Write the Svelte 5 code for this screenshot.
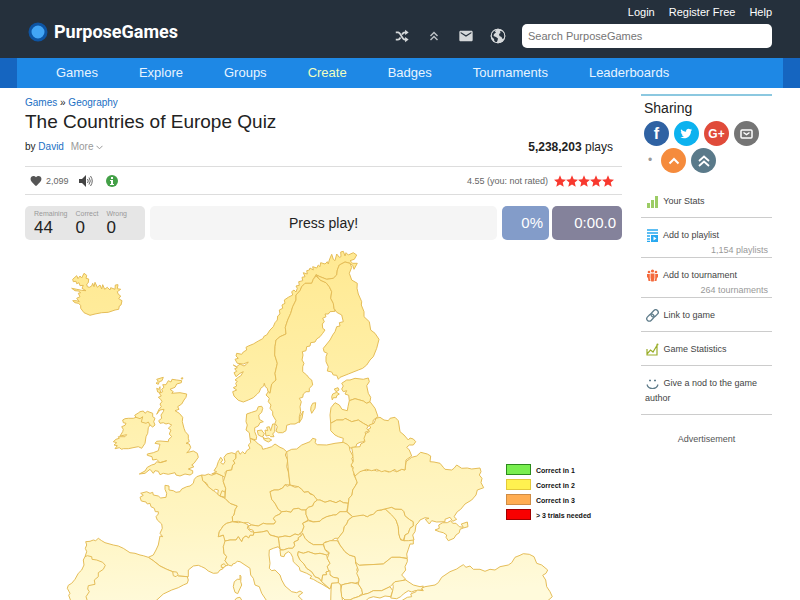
<script>
  const menu = ["Games", "Explore", "Groups", "Create", "Badges", "Tournaments", "Leaderboards"];

  const score = [
    { label: "Remaining", value: 44 },
    { label: "Correct", value: 0 },
    { label: "Wrong", value: 0 },
  ];

  const actions = [
    { icon: "stats", label: "Your Stats" },
    { icon: "playlist", label: "Add to playlist", note: "1,154 playlists" },
    { icon: "people", label: "Add to tournament", note: "264 tournaments" },
    { icon: "link", label: "Link to game" },
    { icon: "chart", label: "Game Statistics" },
    { icon: "smile", label: "Give a nod to the game author" },
  ];

  const legend = [
    { label: "Correct in 1", fill: "#78ee4f", stroke: "#2c8a1c" },
    { label: "Correct in 2", fill: "#fff150", stroke: "#e3c93a" },
    { label: "Correct in 3", fill: "#ffad52", stroke: "#cf8c45" },
    { label: "> 3 trials needed", fill: "#f80000", stroke: "#a00000" },
  ];

  // outlines are drawn on a grid three times finer than the map,
  // each sheet has its own origin
  const sheets = [
    {
      x: 220,
      y: 240,
      shapes: {
        norway:
          "133,430 131,438 122,445 118,456 112,462 100,473 85,480 70,486 55,481 42,468 38,455 50,450 40,443 50,438 47,430 52,424 45,420 55,412 62,408 70,395 60,400 48,410 42,398 50,394 44,386 52,383 40,375 50,380 60,372 72,378 78,374 85,366 70,372 52,370 45,358 55,355 48,348 50,340 65,343 70,336 80,330 78,322 85,318 100,312 115,303 128,296 133,288 140,285 150,270 160,260 165,248 172,240 173,228 180,222 178,210 188,205 186,195 195,190 193,180 205,172 218,165 215,155 222,150 228,156 232,145 228,138 238,136 236,125 248,122 246,112 255,110 250,98 262,102 260,92 268,90 270,84 280,90 278,80 290,84 295,75 300,80 302,68 315,72 322,65 325,72 328,60 335,43 340,58 345,62 350,42 358,52 363,50 362,36 370,34 375,48 378,38 385,45 400,38 410,45 403,58 390,62 398,70 412,70 402,88 398,76 390,70 375,66 358,75 352,90 350,105 340,115 320,118 300,110 288,104 280,118 275,130 255,130 245,140 240,152 228,165 228,180 218,200 212,220 203,240 196,262 198,282 180,290 168,300 165,320 164,345 172,370 165,400 168,420 155,432 150,460 144,455 142,445 136,440",
        sweden:
          "288,108 300,120 318,128 328,140 335,155 332,175 340,190 342,205 345,214 330,215 325,222 315,222 318,230 308,235 313,245 307,252 308,265 315,270 308,280 300,290 290,297 285,306 272,308 270,318 260,320 258,332 247,335 249,345 246,360 252,370 248,380 248,395 260,405 268,415 275,420 278,435 268,445 268,455 258,455 250,462 248,472 238,475 244,485 240,500 242,515 238,530 238,545 225,552 212,552 200,556 198,572 188,578 175,578 168,573 172,560 165,550 168,542 158,525 158,515 150,505 153,495 145,485 148,475 138,465 145,455 150,460 155,432 168,420 165,400 172,370 164,345 165,320 168,300 180,290 198,282 196,262 203,240 212,220 218,200 228,180 228,165 240,152 245,140 255,130 275,130 280,118",
        finland:
          "288,104 300,110 320,118 340,115 350,105 352,90 358,75 375,66 390,70 395,82 388,100 395,120 412,130 411,145 415,162 425,185 424,195 432,215 432,230 448,245 452,270 465,280 477,298 470,325 460,350 450,360 440,375 428,385 415,390 385,402 360,412 355,418 350,406 340,405 335,396 322,393 325,380 318,365 318,350 322,340 312,335 310,325 318,315 330,300 338,285 345,275 350,260 360,258 358,248 370,245 365,225 350,217 342,205 340,190 332,175 335,155 328,140 318,128 300,120",
        estonia:
          "365,430 380,420 390,420 405,415 430,418 445,414 448,425 440,437 445,460 452,472 450,485 440,490 430,483 405,476 388,482 386,466 375,462 380,452 370,455 365,447 370,438",
        latvia:
          "388,482 405,476 430,483 440,490 450,485 465,505 474,530 460,540 458,552 445,558 430,550 415,540 395,545 375,535 370,540 350,540 332,550 330,525 333,503 345,488 358,495 366,508 382,512 384,500",
        lithuania:
          "332,550 350,540 370,540 375,535 395,545 415,540 430,550 445,558 440,566 447,572 435,577 438,585 432,605 420,607 410,612 408,620 395,625 385,622 378,612 368,608 370,595 355,590 345,585 332,572",
        saaremaa: "338,462 350,457 358,462 350,467 349,473 340,473 337,480 335,470",
        hiiumaa: "343,447 354,443 357,450 348,455",
        gotland: "272,510 273,500 278,490 287,488 285,505 275,520",
        oland: "238,548 240,530 250,513 246,535",
        jutland:
          "78,570 82,555 78,545 80,522 95,517 110,512 115,500 125,499 128,505 125,517 116,525 118,538 130,545 120,548 115,558 104,563 104,575 110,590 108,600 90,595 88,578",
        funen: "112,572 125,570 128,576 133,580 130,588 125,590 115,585",
        zealand: "135,570 143,572 140,562 148,560 152,572 158,552 165,552 164,575 158,582 162,590 152,590 148,586 138,588",
        lolland: "128,590 135,596 145,594 155,600 145,606 133,600",
      },
    },
    {
      x: 60,
      y: 260,
      shapes: {
        iceland:
          "38,58 50,47 54,56 60,48 65,54 72,40 80,46 78,55 86,57 85,68 80,72 82,80 88,82 95,78 98,70 102,80 105,67 112,82 120,75 125,87 128,74 134,88 142,82 150,90 152,83 165,88 166,75 174,74 172,86 182,88 172,95 175,103 182,108 176,116 186,122 183,135 178,138 176,148 165,150 145,157 125,158 105,162 90,166 72,158 62,145 62,136 55,130 45,128 38,122 50,122 58,125 50,115 60,110 55,100 62,98 55,93 45,92 35,85 50,88 65,91 78,92 66,85 70,76 60,77 57,68 50,71 48,64 40,65",
        britain:
          "325,362 333,366 336,358 350,360 365,362 364,368 350,372 345,382 330,388 340,395 335,400 360,398 380,402 378,412 372,420 365,432 353,440 357,448 345,452 358,460 368,472 367,485 372,505 376,515 385,525 385,535 388,545 378,550 388,552 392,562 387,572 380,578 400,573 412,580 415,592 402,610 395,615 402,620 385,627 398,632 398,640 390,645 375,642 360,648 348,645 345,638 325,643 310,640 300,644 295,634 285,632 280,640 270,628 255,640 238,642 255,633 262,622 275,615 285,612 290,605 300,608 320,602 300,608 290,598 278,600 276,590 262,586 262,582 280,578 295,572 298,560 300,553 285,550 290,544 300,543 325,545 326,538 335,530 328,522 333,510 325,505 335,495 325,490 318,492 310,488 300,490 296,482 305,475 303,465 310,455 312,448 300,450 290,463 297,448 304,440 300,432 306,425 302,418 295,412 304,408 298,400 308,395 305,388 312,382 308,374 318,374",
        lewis: "288,370 295,364 290,358 310,352 306,362 298,365 295,373",
        skye: "290,385 296,388 300,380 300,390 303,398 293,396",
        orkney: "364,354 368,353 368,357 364,357",
        ireland:
          "188,480 195,476 205,475 220,475 228,472 224,466 236,458 240,455 250,453 255,460 262,454 278,460 278,470 285,475 281,485 285,495 278,501 270,495 265,503 263,520 258,530 255,550 245,565 235,560 225,562 205,566 190,566 185,568 178,563 165,566 172,557 162,555 170,548 160,545 168,538 178,535 175,530 195,530 200,524 180,528 188,515 190,508 185,500 195,496 198,490 190,488",
      },
      borders: ["228,472 240,476 248,470 244,486 258,490 265,486 270,495"],
    },
    {
      x: 50,
      y: 440,
      shapes: {
        france:
          "455,105 440,110 433,118 430,130 420,138 410,140 395,147 390,155 378,157 370,152 357,150 357,138 345,136 345,148 350,160 348,172 332,174 325,168 310,165 308,157 300,160 290,155 272,160 280,166 270,172 274,183 288,186 292,192 300,190 303,200 313,205 316,215 325,215 325,222 318,230 322,240 335,252 337,265 330,280 338,290 330,288 325,315 318,330 310,345 295,352 310,362 330,378 350,388 368,395 385,408 415,410 415,390 430,378 445,376 455,380 465,385 475,393 490,400 503,399 510,390 518,387 520,380 535,375 525,362 530,350 522,340 520,320 527,308 525,300 522,285 505,290 508,275 515,265 520,257 530,250 548,245 547,230 552,225 556,208 562,198 540,190 525,175 510,168 495,155 475,140 460,122",
        belgium:
          "455,105 465,106 475,102 485,106 500,100 518,108 520,125 527,145 522,170 510,168 503,163 505,150 497,148 490,152 475,140 470,130 458,122",
        netherlands:
          "485,102 500,95 492,92 500,80 505,65 512,52 518,60 512,68 520,73 525,65 522,52 530,42 545,38 557,42 558,55 550,62 555,70 548,75 545,90 530,92 525,98 528,115 518,108 500,100",
        luxembourg: "510,168 516,152 525,156 525,172",
        switzerland:
          "505,290 508,275 515,265 520,257 530,250 548,245 565,248 575,245 595,255 592,265 603,275 612,276 610,286 600,286 596,294 588,288 580,293 575,305 565,290 558,300 540,300 525,303 520,285",
        spain:
          "295,352 280,347 270,345 255,340 240,338 220,325 205,318 190,315 165,308 155,302 145,295 137,302 130,300 120,304 107,305 110,315 106,325 110,335 105,350 100,360 102,375 95,390 85,400 75,418 65,430 55,436 52,445 60,460 56,466 62,482 318,482 340,462 365,450 385,443 400,435 412,430 415,420 412,410 385,408 368,395 350,388 330,378 310,362",
        andorra: "368,395 380,396 384,404 378,410 370,407",
        monaco: "514,375 522,371 527,376 522,383 514,382",
        corsica: "570,405 573,410 572,425 575,435 568,450 563,461 555,457 550,440 553,425 562,418 570,418",
        sardinia: "553,482 560,474 570,472 576,482",
      },
      borders: [
        "105,350 112,347 125,350 126,358 140,360 158,367 166,376 160,388 145,398 145,410 133,420 135,433 115,437 113,447 118,455 108,470 112,482",
      ],
    },
    {
      x: 230,
      y: 420,
      shapes: {
        germany:
          "18,97 25,92 30,103 38,95 45,102 50,92 60,85 55,75 62,68 60,55 75,62 85,72 95,78 98,88 110,85 125,80 135,72 150,82 160,86 170,95 166,105 173,120 170,140 175,155 178,175 180,195 165,194 158,204 145,210 132,210 120,215 122,220 125,238 135,250 145,268 155,275 150,282 137,288 130,295 137,305 132,312 110,312 100,310 85,318 65,315 55,308 40,308 25,304 8,305 7,290 12,285 16,268 22,258 0,250 -15,235 -13,205 -20,185 -12,160 -10,152 5,150 8,135 15,130 10,122 18,115",
        poland:
          "170,95 185,88 200,87 215,75 240,65 248,55 258,58 255,68 262,74 290,75 315,70 340,67 352,73 358,80 360,92 370,110 365,115 370,128 363,138 372,150 372,165 382,185 375,200 368,210 366,225 357,235 355,250 340,248 330,242 318,248 300,242 285,247 270,240 262,242 250,225 240,220 235,215 222,217 215,208 205,200 180,195 175,150",
        czechia:
          "120,215 132,210 145,210 158,204 165,194 172,199 180,195 195,202 205,200 215,208 222,217 235,215 240,222 250,225 262,240 252,248 248,258 235,262 228,270 215,270 205,265 190,267 183,277 170,274 155,275 145,268 135,250 125,238",
        austria:
          "65,315 85,318 100,310 110,312 132,312 137,305 130,295 137,288 150,282 155,275 170,274 183,277 190,267 205,265 215,270 228,270 228,283 235,300 218,310 222,320 216,335 205,345 195,342 180,350 165,348 145,352 130,347 120,345 112,332 95,336 72,338 68,330 58,328 55,318",
        slovakia:
          "228,270 235,262 248,258 252,248 262,240 270,240 285,247 300,242 318,248 330,242 340,248 355,250 350,275 340,277 330,275 318,285 310,285 290,290 275,298 270,304 250,305 235,300 228,283",
        hungary:
          "235,302 250,306 270,304 275,298 290,290 310,285 318,285 330,275 350,275 368,290 355,300 350,312 343,320 340,335 325,355 315,355 300,365 285,366 280,374 250,374 235,365 225,355 215,338 222,320 218,310",
        slovenia:
          "145,352 165,348 180,350 195,342 205,345 212,340 214,347 205,353 205,360 192,366 194,377 188,385 175,385 160,390 150,388 147,370",
        croatia:
          "150,390 160,390 175,385 188,385 194,377 192,366 205,360 205,353 214,347 218,340 225,355 235,365 250,374 280,374 285,388 290,395 298,398 290,405 270,400 255,402 235,395 220,400 205,395 203,405 210,420 222,432 230,445 245,455 255,470 268,475 275,485 300,507 275,492 262,485 250,478 240,475 245,468 230,460 210,452 208,442 197,432 190,425 188,412 182,400 175,395 165,402 162,410 152,408",
        bosnia:
          "205,395 220,400 235,395 255,402 270,400 290,405 292,415 300,430 292,440 300,452 288,456 290,464 278,465 275,485 268,475 255,470 245,455 230,445 222,432 210,420 203,405",
        serbia:
          "280,370 300,362 322,362 330,375 345,395 358,405 375,410 378,425 385,435 380,450 385,460 388,485 375,490 365,488 345,492 335,495 325,490 325,475 310,472 300,465 292,440 300,430 292,415 298,398 285,388",
        montenegro: "278,465 290,464 288,456 300,452 300,465 310,472 325,475 325,490 305,490 300,507 275,485",
        albania: "305,490 325,488 332,495 333,510 335,525 338,545 302,545 303,510",
        macedonia: "335,495 345,492 365,488 385,492 395,508 398,520 385,530 370,535 360,540 345,540 335,530 333,510",
        italy:
          "-15,363 0,360 18,360 25,350 35,365 40,353 48,348 56,354 60,346 70,346 72,338 95,336 112,332 120,345 145,352 147,370 150,388 145,380 130,385 118,390 117,405 120,430 118,445 125,452 135,450 150,465 155,480 165,498 185,515 200,518 210,513 218,518 205,528 222,545 112,545 95,520 88,500 75,495 70,475 62,465 60,445 45,435 30,425 22,424 15,430 8,432 5,438 -5,435 -15,422 -10,410 -18,400 -20,380",
        romania:
          "368,290 380,285 400,285 412,290 420,285 430,283 440,272 455,270 465,266 480,280 490,285 498,300 505,320 506,340 512,360 525,362 540,352 550,352 550,372 540,372 535,388 530,402 532,415 510,412 485,412 460,432 420,434 388,436 378,432 375,410 358,405 345,395 330,375 322,358 340,335 343,320 350,312 355,300",
        moldova:
          "455,269 470,264 485,262 495,267 515,268 522,275 525,287 538,298 550,305 550,318 540,325 535,340 525,345 520,362 510,355 506,340 505,320 498,300 485,285 465,266",
        bulgaria:
          "376,426 388,436 420,434 460,432 485,412 510,412 532,416 532,425 525,440 527,450 515,465 527,478 510,485 495,485 488,492 480,500 455,512 430,512 415,520 398,524 395,508 385,492 388,478 380,460 385,450",
        greece:
          "338,545 345,540 360,540 370,535 385,530 398,524 415,520 430,512 455,512 480,500 488,512 482,530 465,528 450,534 430,530 415,535 405,545",
        thrace:
          "488,492 495,485 527,480 550,495 570,500 580,498 575,510 555,512 545,516 535,512 520,522 512,530 500,536 482,534 488,512 490,500",
        ukraine:
          "372,162 382,158 390,150 410,152 425,147 440,153 460,150 475,156 485,150 500,155 515,148 525,150 528,125 545,112 560,108 572,97 592,102 602,108 600,125 612,126 630,130 640,142 645,148 665,150 672,145 680,135 695,145 712,144 725,147 750,144 753,155 748,165 756,175 753,188 761,203 742,210 738,225 725,240 705,252 692,268 682,275 672,290 680,298 668,304 660,292 645,298 645,305 620,306 605,302 598,312 586,298 597,295 585,293 570,300 565,308 558,315 555,335 548,345 552,360 535,362 522,362 525,345 535,340 540,325 550,318 550,305 538,298 525,287 522,275 515,268 495,267 485,262 455,269 440,272 430,283 420,285 412,290 400,285 368,290 352,275 357,235 366,225 368,210 382,188",
      },
    },
    {
      x: 380,
      y: 420,
      shapes: {
        crimea:
          "165,330 178,325 176,315 188,308 202,308 212,302 218,310 228,310 238,320 250,322 244,312 262,306 264,320 250,324 240,328 238,338 228,345 222,355 205,362 198,352 200,345 190,338 178,335",
        turkey:
          "60,545 82,532 95,530 92,522 108,515 112,510 130,512 125,505 135,500 165,495 175,488 185,472 210,455 230,447 240,440 250,434 258,442 270,438 280,448 300,448 315,454 330,448 345,450 360,440 385,435 395,428 405,412 420,406 430,401 448,403 462,410 470,430 485,435 503,450 498,460 488,466 497,480 500,500 510,515 517,530 500,545",
      },
    },
    {
      x: 300,
      y: 370,
      shapes: {
        belarus:
          "155,232 180,230 182,222 195,215 192,205 198,190 208,185 205,178 212,174 208,165 222,160 228,145 240,142 252,150 265,152 270,145 285,142 295,152 297,165 300,185 312,195 325,210 330,204 340,207 347,215 340,225 328,225 320,232 328,240 335,258 318,270 315,300 305,298 290,305 285,298 270,306 255,302 245,305 230,298 215,302 200,298 180,305 165,318 158,300 160,292 153,285 160,275 158,250",
      },
    },
  ];

  function place(points, sheet) {
    return points
      .split(" ")
      .map((pair) => {
        const [x, y] = pair.split(",");
        return (sheet.x + x / 3).toFixed(1) + "," + (sheet.y + y / 3).toFixed(1);
      })
      .join(" ");
  }

  let query = "";
</script>

<header>
  <a class="logo" href="/">
    <svg width="20" height="20" viewBox="0 0 20 20" aria-hidden="true">
      <circle cx="10" cy="10" r="8" fill="#42a5f5" stroke="#0d54a3" stroke-width="3" />
    </svg>
    <span>PurposeGames</span>
  </a>

  <div class="header-right">
    <div class="account">
      <a href="/login">Login</a>
      <a href="/register">Register Free</a>
      <a href="/help">Help</a>
    </div>
    <div class="tools">
      <a href="/random" aria-label="Random game">
        <svg viewBox="-1 -1 18 18" fill="none" stroke="#d5d8da" stroke-width="2">
          <path d="M1 4h2.500c3.500 0 4 8 8 8h1M1 12h2.500c1.300 0 2.100-1 2.800-2.300M8 6.300C8.800 5 9.700 4 11.500 4h1" />
          <path d="M11.500 1v6L15.500 4zM11.500 9v6l4-3z" fill="#d5d8da" stroke="none" />
        </svg>
      </a>
      <a href="/top" aria-label="Top games">
        <svg viewBox="0 0 16 16" fill="none" stroke="#bfc3c7" stroke-width="1.400">
          <path d="M4.500 8L8 4.500 11.500 8M4.500 12L8 8.500l3.500 3.500" />
        </svg>
      </a>
      <a href="/messages" aria-label="Messages">
        <svg viewBox="0 1 24 22" fill="#d5d8da">
          <path d="M20 4H4c-1.100 0-2 .9-2 2v12c0 1.100.9 2 2 2h16c1.100 0 2-.9 2-2V6c0-1.100-.9-2-2-2zm0 4l-8 5-8-5V6l8 5 8-5v2z" />
        </svg>
      </a>
      <a href="/language" aria-label="Language">
        <svg viewBox="0 0 16 16">
          <circle cx="8" cy="8" r="7.300" fill="#d5d8da" />
          <path d="M7 1.500L4.500 3 6 4.500 4 6l-.5 2L6 9l2 1.500-.5 2L6.500 15 4.500 14l-.5-3-2-2L1 6.500 3 3zM10 3l3 .5L15 7l-.5 3-2 1-1-2L9.500 8 9 6l1.500-1z" fill="#25303c" />
          <circle cx="8" cy="8" r="6.800" fill="none" stroke="#d5d8da" />
        </svg>
      </a>
      <input type="search" aria-label="Search" placeholder="Search PurposeGames" bind:value={query} />
    </div>
  </div>
</header>

<nav>
  <div class="menu">
    {#each menu as item}
      <a href="/{item.toLowerCase()}" class:create={item === "Create"}>{item}</a>
    {/each}
  </div>
</nav>

<div class="page">
  <main>
    <div class="crumbs"><a href="/games">Games</a> » <a href="/geography">Geography</a></div>
    <h1>The Countries of Europe Quiz</h1>
    <div class="byline">
      <div>
        by <a href="/david">David</a>
        <button class="more">
          More
          <svg width="7" height="5" viewBox="0 0 7 5" fill="none" stroke="#999"><path d="M.5.800l3 3 3-3" /></svg>
        </button>
      </div>
      <div class="plays"><b>5,238,203</b> plays</div>
    </div>

    <div class="toolbar">
      <button class="likes" aria-label="Like, 2,099 likes">
        <svg width="12" height="12" viewBox="1 2 22 20" fill="#555">
          <path
            d="M12 21.350l-1.450-1.320C5.400 15.360 2 12.280 2 8.500 2 5.420 4.420 3 7.500 3c1.740 0 3.410.81 4.500 2.090C13.090 3.810 14.760 3 16.500 3 19.580 3 22 5.420 22 8.500c0 3.780-3.400 6.860-8.550 11.540z"
          />
        </svg>
        2,099
      </button>
      <button aria-label="Sound">
        <svg width="14" height="12" viewBox="0 0 14 12" fill="none" stroke="#666">
          <path d="M0 4h3l4-4v12L3 8H0z" fill="#444" stroke="none" />
          <path d="M8.500 4q1.500 2 0 4M10 2.500q2.600 3.500 0 7M11.500 1q3.500 5 0 10" />
        </svg>
      </button>
      <button aria-label="Information">
        <svg width="12" height="12" viewBox="0 0 12 12">
          <circle cx="6" cy="6" r="6" fill="#43a047" />
          <path d="M5 2h2v2H5zM4 5h3v4h1v1H4V9h1V6H4z" fill="#fff" />
        </svg>
      </button>
      <div class="rating">
        <span>4.55 (you: not rated)</span>
        <div class="stars">
          {#each Array(5) as _}
            <svg viewBox="2 2 20 19" fill="#f8392f">
              <path d="M12 17.270L18.180 21l-1.640-7.030L22 9.240l-7.190-.61L12 2 9.190 8.630 2 9.240l5.460 4.730L5.820 21z" />
            </svg>
          {/each}
        </div>
      </div>
    </div>

    <div class="board">
      <div class="score">
        {#each score as item}
          <div>
            <span>{item.label}</span>
            <strong>{item.value}</strong>
          </div>
        {/each}
      </div>
      <button class="prompt">Press play!</button>
      <div class="meters">
        <div class="percent">0%</div>
        <div class="clock">0:00.0</div>
      </div>
    </div>

    <svg class="map" viewBox="25 240 597 360" role="img" aria-label="Map of Europe">
      <defs>
        <linearGradient id="land" gradientUnits="userSpaceOnUse" x1="300" y1="250" x2="320" y2="600">
          <stop offset="0" stop-color="#ffe992" />
          <stop offset=".3" stop-color="#ffeea3" />
          <stop offset=".55" stop-color="#fff2b4" />
          <stop offset=".75" stop-color="#fff5c2" />
          <stop offset="1" stop-color="#fffadb" />
        </linearGradient>
      </defs>
      <g class="countries">
        {#each sheets as sheet}
          {#each Object.values(sheet.shapes) as shape}
            <polygon points={place(shape, sheet)} />
          {/each}
          {#each sheet.borders || [] as border}
            <polyline points={place(border, sheet)} />
          {/each}
        {/each}
      </g>
      {#each legend as row, i}
        <rect x="506.500" y={464.5 + i * 15} width="24" height="10" fill={row.fill} stroke={row.stroke} />
        <text x="536" y={473 + i * 15}>{row.label}</text>
      {/each}
    </svg>
  </main>

  <aside>
    <h2>Sharing</h2>
    <ul class="share">
      <li><a class="facebook" href="/share/facebook" aria-label="Facebook">f</a></li>
      <li>
        <a class="twitter" href="/share/twitter" aria-label="Twitter">
          <svg width="13" height="13" viewBox="1 1 23 23" fill="#fff">
            <path
              d="M22.460 6c-.77.35-1.600.58-2.460.69.88-.53 1.560-1.370 1.880-2.380-.83.5-1.750.85-2.720 1.050C18.370 4.500 17.260 4 16 4c-2.350 0-4.270 1.920-4.270 4.290 0 .34.040.67.110.98C8.280 9.090 5.110 7.380 3 4.790c-.37.63-.58 1.370-.58 2.150 0 1.490.75 2.810 1.910 3.560-.71 0-1.370-.2-1.950-.5v.03c0 2.080 1.480 3.820 3.440 4.210a4.220 4.220 0 0 1-1.930.07 4.280 4.280 0 0 0 4 2.980 8.520 8.520 0 0 1-5.330 1.840c-.34 0-.68-.02-1.020-.06C3.440 20.290 5.700 21 8.120 21 16 21 20.330 14.460 20.330 8.790c0-.19 0-.37-.01-.56.84-.6 1.560-1.360 2.140-2.230z"
            />
          </svg>
        </a>
      </li>
      <li><a class="google" href="/share/google" aria-label="Google Plus">G+</a></li>
      <li>
        <a class="mail" href="/share/mail" aria-label="Mail">
          <svg width="13" height="10" viewBox="0 0 13 10" fill="none" stroke="#fff" stroke-width="1.500">
            <rect x="1" y="1" width="11" height="8" rx="1" />
            <path d="M3.500 3.500l3 2 3-2" />
          </svg>
        </a>
      </li>
      <li class="dot">•</li>
      <li>
        <a class="up" href="/vote" aria-label="Vote up">
          <svg width="12" height="8" viewBox="0 0 12 8" fill="none" stroke="#fff" stroke-width="2"><path d="M1.500 6.500L6 2l4.500 4.500" /></svg>
        </a>
      </li>
      <li>
        <a class="top" href="/top" aria-label="Move to top">
          <svg width="12" height="12" viewBox="0 0 12 12" fill="none" stroke="#fff" stroke-width="1.800">
            <path d="M1 6l5-4.500L11 6M1 11l5-4.500L11 11" />
          </svg>
        </a>
      </li>
    </ul>

    <ul class="actions">
      {#each actions as action}
        <li>
          <a href="/{action.icon}">
            <svg width="13" height="13" viewBox="0 0 13 13" fill="none">
              {#if action.icon === "stats"}
                <path d="M1 8h3v5H1zM5 5h3v8H5zM9 1h3v12H9z" fill="#9ccc65" />
              {:else if action.icon === "playlist"}
                <path d="M1 1h11M1 4h11M1 7h3M1 10h3M1 12.500h3" stroke="#29a9f0" stroke-width="1.300" />
                <path d="M5 6h7v7H5zm2.500 1.500v4l3-2z" fill="#29a9f0" fill-rule="evenodd" />
              {:else if action.icon === "people"}
                <g fill="#f4693c">
                  <circle cx="6.500" cy="2" r="1.600" />
                  <circle cx="3" cy="3" r="1.300" />
                  <circle cx="10" cy="3" r="1.300" />
                  <path d="M4.500 4.500h4V9l-.8 3.500H5.300L4.500 9zM1 5h2.800v4.500l.8 2.500H2.500L2 9 1 8zM9.200 5H12v3l-1 1-.5 3H8.400l.8-2.500z" />
                </g>
              {:else if action.icon === "link"}
                <g stroke="#607d8b" stroke-width="1.300" transform="rotate(-45 6.500 6.500)">
                  <rect x="-.5" y="4" width="8" height="5" rx="2.500" />
                  <rect x="5.500" y="4" width="8" height="5" rx="2.500" />
                </g>
              {:else if action.icon === "chart"}
                <path d="M1 6v6h10V3M1 11l3.500-4L7 9l4.500-7.500" stroke="#9aae2b" stroke-width="1.200" />
                <circle cx="11.500" cy="1.500" r="1" fill="#9aae2b" />
              {:else}
                <path d="M1 7.500q1 4 5.500 4t5.500-4" stroke="#607d8b" stroke-width="1.200" />
                <path d="M3 3.500h2M8 3.500h2" stroke="#607d8b" stroke-width="1.500" />
              {/if}
            </svg>
            {action.label}
          </a>
          {#if action.note}
            <div class="note">{action.note}</div>
          {/if}
        </li>
      {/each}
    </ul>
    <div class="ad">Advertisement</div>
  </aside>
</div>

<style>
  :global(body) {
    background: #fff;
    color: #222;
    font-family: "Liberation Sans", Arial, sans-serif;
    font-size: 10px;
  }

  a {
    color: #1a6fc4;
    text-decoration: none;
  }

  button {
    border: 0;
    padding: 0;
    background: none;
    color: inherit;
    font: inherit;
    cursor: pointer;
  }

  ul {
    list-style: none;
    margin: 0;
    padding: 0;
  }

  header {
    display: flex;
    justify-content: space-between;
    padding: 5px 28px 10px;
    background: #25303c;
  }

  .logo {
    display: flex;
    align-items: center;
    gap: 6px;
    padding-top: 10px;
    color: #fff;
    font-family: Roboto, sans-serif;
    font-size: 18px;
    font-weight: bold;
    line-height: 24px;
  }

  .account {
    display: flex;
    justify-content: flex-end;
    gap: 14px;
    font-size: 11px;
    line-height: 14px;
    margin-bottom: 5px;
  }

  .account a {
    color: #fff;
  }

  .tools {
    display: flex;
    align-items: center;
    gap: 16px;
  }

  .tools svg {
    display: block;
    width: 16px;
    height: 16px;
  }

  .tools input {
    box-sizing: border-box;
    width: 250px;
    height: 24px;
    padding: 0 6px;
    border: 0;
    border-radius: 5px;
    background: #fff;
    font: inherit;
    font-size: 11px;
  }

  .tools input::placeholder {
    color: #757575;
  }

  nav {
    padding: 0 17px;
    background: #1565c0;
  }

  .menu {
    display: flex;
    gap: 41px;
    padding: 0 39px;
    background: #1e88e5;
    font-size: 13px;
    line-height: 30px;
  }

  .menu a {
    color: #e8f4ff;
  }

  .menu a.create {
    color: #f0ffc0;
  }

  .page {
    display: flex;
    gap: 19px;
    padding: 0 28px 0 25px;
  }

  main {
    flex: 1;
    min-width: 0;
    padding-top: 8px;
  }

  .crumbs {
    line-height: 14px;
  }

  h1 {
    margin: 0 0 4px;
    font-size: 19px;
    font-weight: normal;
    line-height: 24px;
  }

  .byline {
    display: flex;
    justify-content: space-between;
    align-items: center;
    padding: 0 9px 10px 0;
    border-bottom: 1px solid #ddd;
    line-height: 18px;
  }

  .more {
    margin-left: 4px;
    color: #999;
  }

  .plays {
    font-size: 12px;
  }

  .toolbar {
    display: flex;
    align-items: center;
    gap: 13px;
    height: 27px;
    padding: 0 8px 0 5px;
    border-bottom: 1px solid #ddd;
    color: #666;
    font-size: 9px;
  }

  .toolbar button {
    display: flex;
    align-items: center;
    gap: 4px;
  }

  .likes {
    margin-right: -3px;
  }

  .rating {
    display: flex;
    align-items: center;
    gap: 6px;
    margin-left: auto;
  }

  .stars {
    display: flex;
  }

  .stars svg {
    width: 12px;
    height: 12px;
  }

  .board {
    display: flex;
    gap: 5px;
    height: 34px;
    margin-top: 11px;
  }

  .score {
    display: flex;
    gap: 8px;
    box-sizing: border-box;
    width: 120px;
    padding: 3px 9px;
    border-radius: 5px;
    background: #e6e6e6;
  }

  .score span {
    display: block;
    color: #999;
    font-size: 7px;
    line-height: 10px;
  }

  .score strong {
    display: block;
    font-size: 17px;
    font-weight: normal;
    line-height: 17px;
  }

  .prompt {
    flex: 1;
    border-radius: 5px;
    background: #f5f5f5;
    font-size: 14px;
  }

  .meters {
    display: flex;
    gap: 3px;
    color: #fff;
    font-size: 15px;
    line-height: 34px;
    text-align: right;
  }

  .meters div {
    box-sizing: border-box;
    padding-right: 6px;
    border-radius: 5px;
  }

  .percent {
    width: 47px;
    background: #839cc9;
  }

  .clock {
    width: 70px;
    background: #84829b;
  }

  .map {
    display: block;
    width: 100%;
  }

  .countries {
    fill: url(#land);
    stroke: #e5bd58;
    stroke-linejoin: round;
  }

  .countries polyline {
    fill: none;
  }

  .map text {
    fill: #111;
    font-size: 7px;
    font-weight: bold;
  }

  aside {
    width: 131px;
    margin-top: 6px;
    border-top: 2px solid #8cc8e0;
    color: #555;
    font-size: 9px;
  }

  h2 {
    margin: 4px 0 4px 3px;
    color: #222;
    font-size: 14px;
    font-weight: normal;
    line-height: 17px;
  }

  .share {
    display: flex;
    flex-wrap: wrap;
    gap: 2px 5px;
    margin: 0 0 11px 3px;
  }

  .share a {
    display: flex;
    align-items: center;
    justify-content: center;
    width: 25px;
    height: 25px;
    border-radius: 50%;
    color: #fff;
    font-size: 12px;
    font-weight: bold;
  }

  .share .facebook {
    background: #2f62a3;
    font-size: 16px;
  }

  .share .twitter {
    background: #0cb2ef;
  }

  .share .google {
    background: #e04b3a;
  }

  .share .mail {
    background: #757575;
  }

  .share .up {
    background: #f58b3c;
  }

  .share .top {
    background: #5a7a8a;
  }

  .dot {
    width: 12px;
    color: #999;
    font-size: 12px;
    line-height: 25px;
    text-align: center;
  }

  .actions li {
    padding: 10px 4px 8px;
    border-bottom: 1px solid #ccc;
    line-height: 15px;
  }

  .actions li:has(.note) {
    padding-bottom: 0;
  }

  .actions a {
    color: #444;
  }

  .actions svg {
    margin: 0 2px 0 1px;
    vertical-align: middle;
  }

  .note {
    color: #999;
    line-height: 14px;
    text-align: right;
  }

  .ad {
    margin-top: 17px;
    line-height: 15px;
    text-align: center;
  }
</style>
